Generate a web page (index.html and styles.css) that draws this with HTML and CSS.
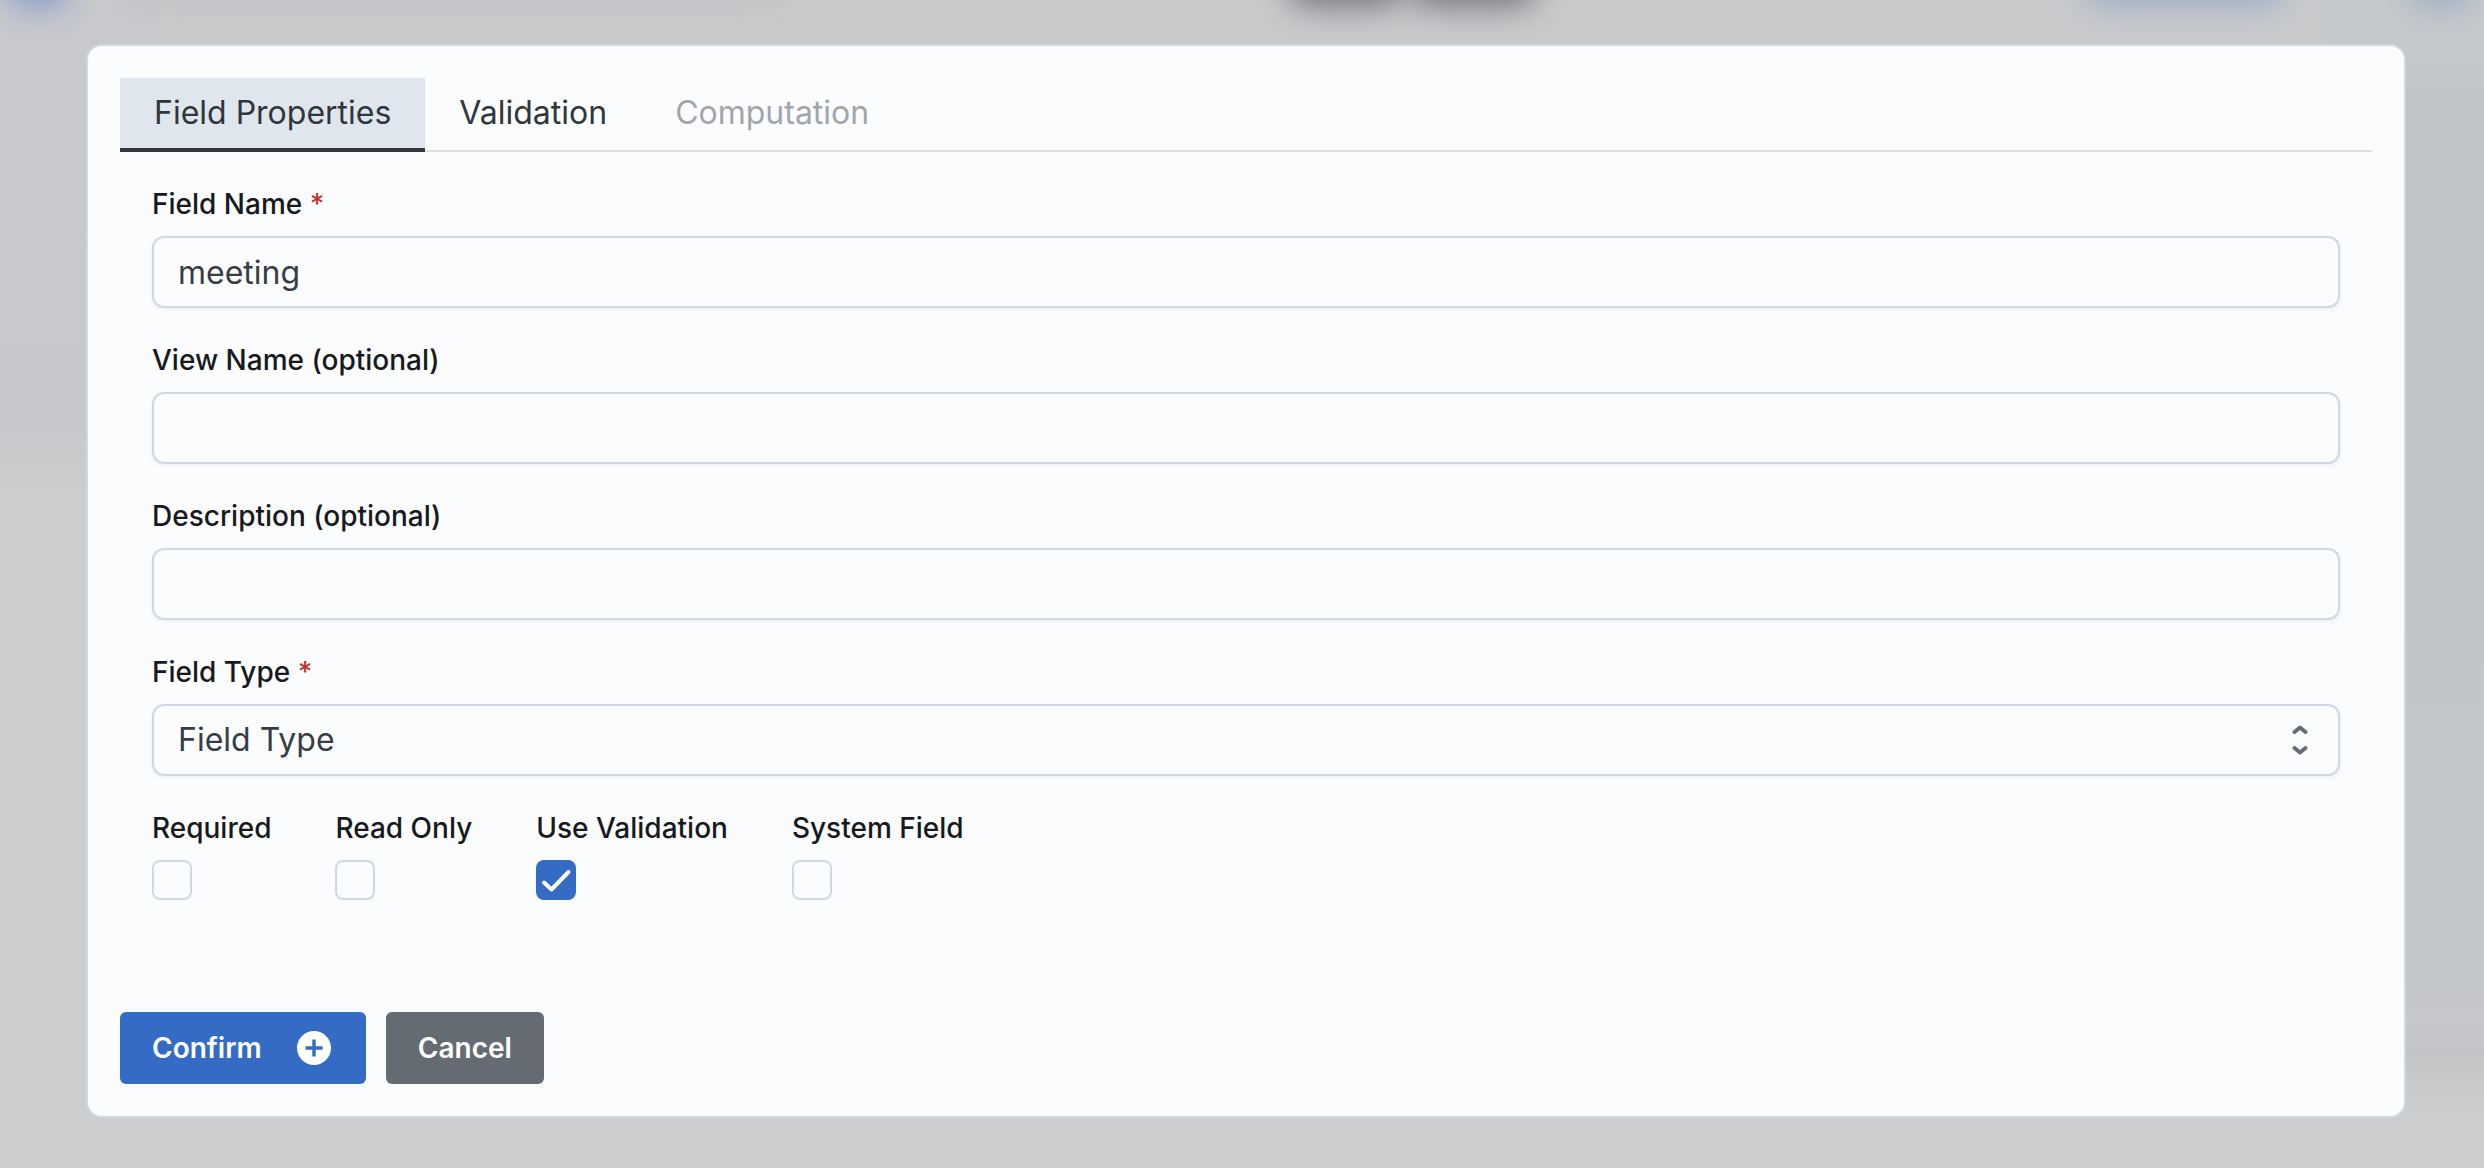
FILE: index.html
```html
<!DOCTYPE html>
<html lang="en">
<head>
<meta charset="utf-8">
<meta name="viewport" content="width=device-width, initial-scale=1">
<title>Field Properties</title>
<link rel="stylesheet" href="styles.css">
</head>
<body>
<div class="backdrop" aria-hidden="true">
  <span class="smudge smudge-logo"></span>
  <span class="smudge smudge-crumb"></span>
  <span class="smudge smudge-title"></span>
  <span class="smudge smudge-title smudge-title-end"></span>
  <span class="smudge smudge-link"></span>
  <span class="smudge smudge-menu"></span>
</div>
<main class="modal" role="dialog" aria-label="Field Properties">
  <div class="tabs" role="tablist">
    <button class="tab tab-active" type="button" role="tab" aria-selected="true">Field Properties</button>
    <button class="tab" type="button" role="tab" aria-selected="false">Validation</button>
    <button class="tab" type="button" role="tab" aria-selected="false" disabled>Computation</button>
  </div>
  <form class="form">
    <div class="fields">
      <div class="field">
        <label class="label" for="field-name">Field Name <span class="mark">*</span></label>
        <input class="control" id="field-name" type="text" value="meeting">
      </div>
      <div class="field">
        <label class="label" for="view-name">View Name (optional)</label>
        <input class="control" id="view-name" type="text">
      </div>
      <div class="field">
        <label class="label" for="description">Description (optional)</label>
        <input class="control" id="description" type="text">
      </div>
      <div class="field">
        <label class="label" for="field-type">Field Type <span class="mark">*</span></label>
        <div class="select">
          <select class="control" id="field-type"><option>Field Type</option></select>
          <svg class="select-icon" viewBox="0 0 40 40" aria-hidden="true"><path d="M14.500 12 20 7.500l5.500 4.500M14.500 28l5.500 4.500 5.500-4.500"/></svg>
        </div>
      </div>
      <div class="checks">
        <div class="field"><label class="label" for="required">Required</label><input class="check" id="required" type="checkbox"></div>
        <div class="field"><label class="label" for="read-only">Read Only</label><input class="check" id="read-only" type="checkbox"></div>
        <div class="field">
          <label class="label" for="use-validation">Use Validation</label>
          <div class="check-wrap">
            <input class="check" id="use-validation" type="checkbox" checked>
            <svg class="check-icon" viewBox="0 0 40 40" aria-hidden="true"><path d="M8 22.500l7.500 7L32.500 12"/></svg>
          </div>
        </div>
        <div class="field"><label class="label" for="system-field">System Field</label><input class="check" id="system-field" type="checkbox"></div>
      </div>
    </div>
    <div class="actions">
      <button class="button button-primary" type="button">Confirm
        <svg class="button-icon" viewBox="0 0 40 40" aria-hidden="true"><circle cx="20" cy="20" r="17" fill="#fff"/><path d="M20 11.500v17M11.500 20h17" stroke="#346bc4" stroke-width="3.400"/></svg>
      </button>
      <button class="button button-secondary" type="button">Cancel</button>
    </div>
  </form>
</main>
</body>
</html>
```

FILE: styles.css
```css
* { box-sizing: border-box; }

body {
  margin: 0;
  min-height: 100vh;
  padding: 44px 78px 44px 86px;
  font-family: Inter, "Liberation Sans", sans-serif;
  color: #17191c;
  background: #cccdce;
}

button, input, select { font: inherit; }

/* The page behind the dialog, dimmed and out of focus */
.backdrop {
  position: fixed;
  inset: 0;
  z-index: -1;
  overflow: hidden;
  background:
    linear-gradient(#c5c9cb 0, #c5c9cb 56px, #c1c4c9 90px, #c2c5ca 980px, #c6c7ca 1020px, #c3c4c6 1056px, #cbccce 1100px, #cccdce 1120px) right / 160px 100% no-repeat,
    linear-gradient(#c8c9cc 0, #c7c8cb 430px, #cccdce 490px) left / 160px 100% no-repeat,
    linear-gradient(#c9cacc 0, #c9cacc 60px, #cccdce 200px);
}

.smudge {
  position: absolute;
  top: -60px;
  height: 66px;
  border-radius: 20px;
  filter: blur(16px);
}

.smudge-logo { left: 8px; width: 60px; background: #7f96cb; }
.smudge-crumb { left: 130px; width: 660px; height: 56px; background: #bbbcbe; }
.smudge-title { left: 1288px; width: 114px; background: #707377; }
.smudge-title-end { left: 1410px; width: 126px; }
.smudge-link { left: 2084px; width: 200px; background: #9dadc7; }
.smudge-menu { left: 2410px; width: 60px; background: #98aac8; }

.modal {
  padding: 32px;
  background: #fbfcfe;
  border: 2px solid #cfd8e3;
  border-radius: 16px;
}

.tabs {
  display: flex;
  box-shadow: inset 0 -2px #dddfe2;
}

.tab {
  padding: 15px 34px;
  border: 0;
  border-bottom: 4px solid transparent;
  background: none;
  font-size: 32px;
  line-height: 40px;
  color: #31363d;
}

.tab-active {
  background: #dfe6ed;
  border-color: #31363d;
}

.tab:disabled { color: #a2a6ac; }

.fields {
  display: flex;
  flex-direction: column;
  gap: 32px;
  padding: 32px;
}

.field {
  display: flex;
  flex-direction: column;
  gap: 12px;
}

.label {
  font-size: 28px;
  font-weight: 500;
  line-height: 40px;
}

.mark { color: #bb352b; }

.control {
  width: 100%;
  height: 72px;
  padding: 0 24px;
  appearance: none;
  border: 2px solid #cfd8e3;
  border-radius: 12px;
  background: #fbfcfe;
  box-shadow: 0 2px 4px rgba(0, 0, 0, 0.06);
  font-size: 32px;
  line-height: 40px;
  color: #373d45;
}

.select, .check-wrap {
  display: grid;
  align-items: center;
}

.select > *, .check-wrap > * { grid-area: 1 / 1; }

.select-icon {
  width: 40px;
  height: 40px;
  margin-right: 20px;
  justify-self: end;
  pointer-events: none;
  fill: none;
  stroke: #656b73;
  stroke-width: 4;
  stroke-linecap: round;
  stroke-linejoin: round;
}

.checks {
  display: flex;
  gap: 64px;
}

.check {
  width: 40px;
  height: 40px;
  margin: 0;
  appearance: none;
  border: 2px solid #cfd8e3;
  border-radius: 8px;
  background: #fbfcfe;
}

.check:checked {
  border-color: #346bc4;
  background: #346bc4;
}

.check-icon {
  width: 40px;
  height: 40px;
  pointer-events: none;
  fill: none;
  stroke: #fff;
  stroke-width: 4;
  stroke-linecap: round;
  stroke-linejoin: round;
}

.actions {
  display: flex;
  gap: 20px;
  padding-top: 80px;
}

.button {
  display: flex;
  align-items: center;
  gap: 32px;
  height: 72px;
  padding: 0 32px;
  border: 0;
  border-radius: 6px;
  font-size: 28px;
  font-weight: 600;
  color: #fff;
}

.button-primary { background: #346bc4; }
.button-secondary { background: #656b73; }

.button-icon {
  width: 40px;
  height: 40px;
}
```
